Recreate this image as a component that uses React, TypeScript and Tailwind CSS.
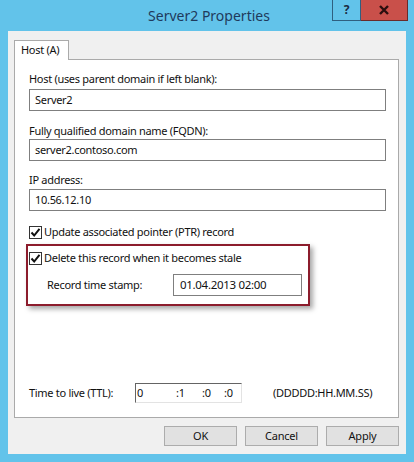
import React from "react";

const font = { fontFamily: '"Noto Sans", "Open Sans", sans-serif' };

function Check() {
  return (
    <div className="w-[13px] h-[13px] border border-[#333] bg-white flex items-center justify-center shrink-0">
      <svg width="11" height="11" viewBox="0 0 11 11">
        <path d="M1.5 5.5 L4.2 8.5 L9.5 1.8" fill="none" stroke="#111" strokeWidth="2" />
      </svg>
    </div>
  );
}

function TextBox({ value, className }: { value: string; className?: string }) {
  return (
    <div className={"h-[22px] border border-[#7f7f7f] bg-white flex items-center pl-[5px] text-[#111] whitespace-nowrap " + (className ?? "")}>
      {value}
    </div>
  );
}

function Btn({ label }: { label: string }) {
  return (
    <div className="w-[73px] h-[20px] border border-[#acacac] bg-[#e1e1e1] flex items-center justify-center text-[11px] tracking-[-0.2px] text-[#111]">
      {label}
    </div>
  );
}

export default function App() {
  return (
    <div className="w-[414px] h-[462px] bg-[#62c3ea] flex flex-col" style={font}>
      <div className="h-[31px] flex relative">
        <div className="flex-1 flex items-center justify-center text-[14px] text-[#1f3a5c] pl-[4px] pb-[1px]">
          Server2 Properties
        </div>
        <div className="absolute right-[6px] top-0 flex h-[21px]">
          <div className="w-[29px] h-[21px] border border-[#2f5f80] border-t-0 flex items-center justify-center text-[12px] font-bold text-[#1a2a40]">
            ?
          </div>
          <div className="w-[47px] h-[21px] bg-[#c9504a] border border-[#6a2a2a] border-t-0 border-l-0 flex items-center justify-center">
            <svg width="12" height="10" viewBox="0 0 12 10">
              <path d="M2 1 L10 9 M10 1 L2 9" stroke="#2a0e0e" strokeWidth="2.4" />
            </svg>
          </div>
        </div>
      </div>
      <div className="mx-[8px] h-[423px] bg-[#f0f0f0] flex flex-col px-[6px] pt-[8px] text-[11px] tracking-[-0.3px]">
        <div className="flex">
          <div className="w-[55px] h-[20px] bg-white border border-[#aaa] border-b-0 flex items-center pl-[6px] text-[#111] relative top-[1px]">
            Host (A)
          </div>
        </div>
        <div className="w-[385px] h-[359px] bg-white border border-[#aaa] flex flex-col pl-[14px] pr-[12px] pt-[12px] text-[#111]">
          <div className="h-[14px] leading-[14px]">Host (uses parent domain if left blank):</div>
          <TextBox value="Server2" className="mt-[3px]" />
          <div className="h-[14px] leading-[14px] mt-[13px]">Fully qualified domain name (FQDN):</div>
          <TextBox value="server2.contoso.com" className="mt-[1px]" />
          <div className="h-[14px] leading-[14px] mt-[12px]">IP address:</div>
          <TextBox value="10.56.12.10" className="mt-[2px]" />
          <div className="flex items-center gap-[2px] mt-[15px] h-[13px]">
            <Check />
            <span>Update associated pointer (PTR) record</span>
          </div>
          <div className="-ml-[3px] mt-[5px] w-[284px] h-[62px] border-2 border-[#8c1c2c] shadow-[3px_3px_5px_rgba(0,0,0,0.35)] flex flex-col pl-[1px] pt-[6px]">
            <div className="flex items-center gap-[2px] h-[13px]">
              <Check />
              <span>Delete this record when it becomes stale</span>
            </div>
            <div className="flex items-center mt-[9px]">
              <span className="w-[144px] pl-[18px] whitespace-nowrap">Record time stamp:</span>
              <TextBox value="01.04.2013 02:00" className="w-[129px] pl-[6px] text-[11.5px]" />
            </div>
          </div>
          <div className="flex items-center mt-[77px] h-[20px]">
            <span className="w-[106px] whitespace-nowrap">Time to live (TTL):</span>
            <div className="w-[107px] h-[20px] bg-white border border-t-[#646464] border-l-[#646464] border-r-[#e3e3e3] border-b-[#e3e3e3] flex items-center relative">
              <span className="absolute left-[1px]">0</span>
              <span className="absolute left-[40px]">:1</span>
              <span className="absolute left-[66px]">:0</span>
              <span className="absolute left-[88px]">:0</span>
            </div>
            <span className="ml-[31px] whitespace-nowrap">(DDDDD:HH.MM.SS)</span>
          </div>
        </div>
        <div className="flex justify-end gap-[8px] mt-[8px] pr-[1px]">
          <Btn label="OK" />
          <Btn label="Cancel" />
          <Btn label="Apply" />
        </div>
      </div>
    </div>
  );
}
